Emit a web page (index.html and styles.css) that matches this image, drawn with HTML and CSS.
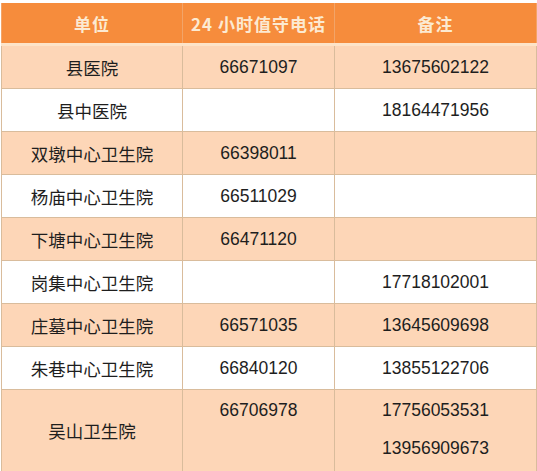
FILE: index.html
```html
<!DOCTYPE html>
<html lang="zh-CN">
<head>
<meta charset="utf-8">
<title>值守电话</title>
<link rel="stylesheet" href="styles.css">
</head>
<body>
<table class="duty">
  <colgroup>
    <col class="c1"><col class="c2"><col class="c3">
  </colgroup>
  <thead>
    <tr><th>单位</th><th>24 小时值守电话</th><th>备注</th></tr>
  </thead>
  <tbody>
    <tr class="peach"><td>县医院</td><td>66671097</td><td>13675602122</td></tr>
    <tr><td>县中医院</td><td></td><td>18164471956</td></tr>
    <tr class="peach"><td>双墩中心卫生院</td><td>66398011</td><td></td></tr>
    <tr><td>杨庙中心卫生院</td><td>66511029</td><td></td></tr>
    <tr class="peach"><td>下塘中心卫生院</td><td>66471120</td><td></td></tr>
    <tr><td>岗集中心卫生院</td><td></td><td>17718102001</td></tr>
    <tr class="peach"><td>庄墓中心卫生院</td><td>66571035</td><td>13645609698</td></tr>
    <tr><td>朱巷中心卫生院</td><td>66840120</td><td>13855122706</td></tr>
    <tr class="peach last"><td>吴山卫生院</td><td class="top">66706978</td><td class="top">17756053531<br>13956909673</td></tr>
  </tbody>
</table>
</body>
</html>
```
FILE: styles.css
```css
html, body {
  margin: 0;
  padding: 0;
  background: #ffffff;
}
body {
  padding: 3px 0 0 1px;
  font-family: "Liberation Sans", "Noto Sans CJK SC", sans-serif;
  color: #1e1e1e;
}
.duty {
  border-collapse: collapse;
  width: 535px;
  table-layout: fixed;
  font-size: 17.5px;
}
.c1 { width: 181px; }
.c2 { width: 152px; }
.c3 { width: 202px; }
.duty th {
  background: #f68c3c;
  color: #fcead2;
  font-weight: bold;
  font-size: 17px;
  letter-spacing: 1px;
  height: 40px;
  padding: 0;
  text-align: center;
  border: 1px solid #f2a468;
  border-top: none;
  border-bottom: 3px solid #fde4c9;
  font-family: "Noto Sans CJK SC", "Liberation Sans", sans-serif;
}
.duty td {
  height: 42px;
  padding: 0;
  text-align: center;
  vertical-align: middle;
  border: 1px solid #d9bc9c;
  background: #ffffff;
}
.duty tr.peach td {
  background: #fdd6b7;
}
.duty tr.last td {
  height: 80px;
}
.duty td.top {
  vertical-align: top;
  line-height: 38px;
  padding-top: 1px;
}
```
